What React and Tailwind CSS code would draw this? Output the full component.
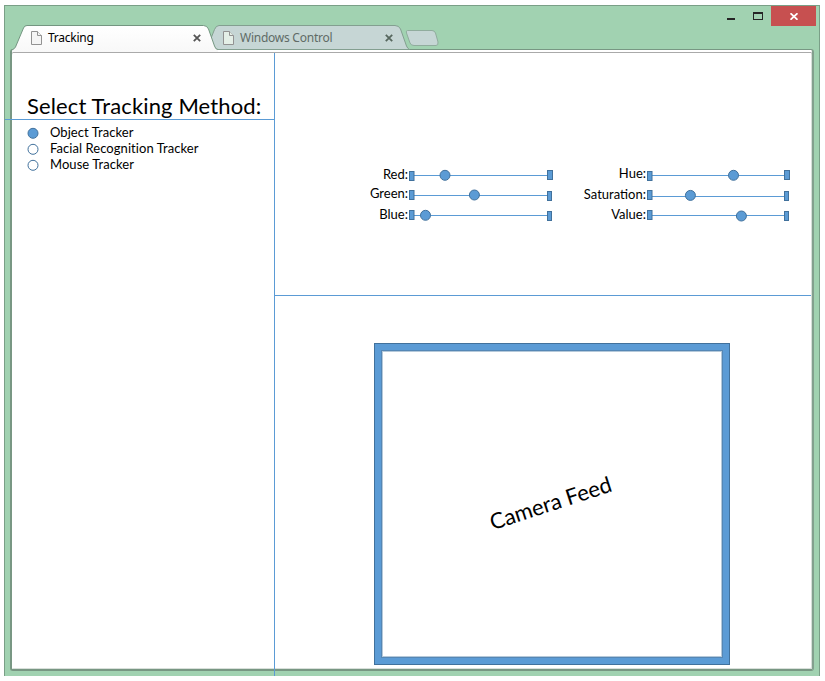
import React from "react";

const rgb = [
  { name: "Red:", nudge: "-mt-0.5", left: 6, line: 10, thumb: 37, ty: 10.3, right: 5, rw: 6 },
  { name: "Green:", nudge: "-mt-1", left: 5, line: 10, thumb: 66.4, ty: 10, right: 6, rw: 5 },
  { name: "Blue:", nudge: "-mt-0.5", left: 5, line: 10, thumb: 17.5, ty: 10.3, right: 6, rw: 5 },
];
const hsv = [
  { name: "Hue:", nudge: "-mt-1", left: 6, line: 10, thumb: 87.5, ty: 10.3, right: 5, rw: 6 },
  { name: "Saturation:", nudge: "-mt-0.5", left: 5, line: 11, thumb: 44.4, ty: 10.4, right: 6, rw: 5 },
  { name: "Value:", nudge: "-mt-0.5", left: 5, line: 10, thumb: 95.4, ty: 11, right: 6, rw: 5 },
];

function Slider({ s, end }) {
  return (
    <svg width="145" height="20" className="block shrink-0" fill="#5b9bd5" stroke="#41719c">
      <rect x="4" y={s.line} width="136" height="1" stroke="none" />
      <rect x="1.5" y={s.left + 0.5} width="4.500" height="9" />
      <rect x={end} y={s.right + 0.5} width={s.rw - 1} height="9" />
      <circle cx={s.thumb} cy={s.ty} r="5" />
    </svg>
  );
}

function SliderGroup({ items, end, className }) {
  return (
    <div className={"flex flex-col " + className}>
      {items.map((s) => (
        <div key={s.name} className="flex h-5 items-center justify-end">
          <span className={"whitespace-nowrap text-[13px] leading-4 " + s.nudge}>{s.name}</span>
          <Slider s={s} end={end} />
        </div>
      ))}
    </div>
  );
}

function PageIcon({ fill }) {
  return (
    <svg width="12" height="14" className="shrink-0" fill={fill} stroke="#929292">
      <path d="M.5 .5H6.500L10.500 4.500V13.500H.5Z" />
      <path d="M6.500 .5V4.500H10.500" />
    </svg>
  );
}

function Cross({ color }) {
  return (
    <svg width="8" height="8" className="shrink-0" stroke={color} strokeWidth="1.8">
      <path d="M.8 .8 7.200 7.200M7.200 .8 .8 7.200" />
    </svg>
  );
}

function Radio({ checked, label }) {
  return (
    <li className="flex h-4 items-center">
      <svg width="12" height="12" className="shrink-0" stroke="#41719c">
        <circle cx="6" cy="6.3" r="5" fill={checked ? "#5b9bd5" : "#fff"} />
      </svg>
      <span className="-mt-0.5 ml-[11px] whitespace-nowrap text-[13px] leading-4 tracking-[0.06px]">{label}</span>
    </li>
  );
}

export default function App() {
  return (
    <div className="h-[681px] w-[825px] overflow-hidden bg-white pl-1 pt-[5px] font-['Lato','Liberation_Sans',sans-serif] text-black">
      <div className="h-[671px] w-[816px] border-x border-t border-[#7a9f87] bg-[#a1d2b1]">
        <header className="relative flex h-[43px] justify-between">
          <svg className="absolute left-0 top-0 z-10" width="440" height="46">
            <defs>
              <linearGradient id="tab" x2="0" y2="1">
                <stop offset="0" stopColor="#fff" />
                <stop offset="1" stopColor="#f8f8f8" />
              </linearGradient>
            </defs>
            <path d="M202 43.500 Q205 38 206.500 31 L209.500 23.500 Q211 19.500 214 19.500 H390 Q394 19.500 395.500 23 L401.500 40 Q402.500 42.500 404.500 43.500 Z" fill="#c6d6d5" stroke="#839f90" />
            <path d="M402.500 24.500 H427 Q429.500 24.500 430.500 27 L433 36 Q433.500 39.500 431 39.500 H409 Q406 39.500 405 37 L401.500 27 Q400.800 24.500 402.500 24.500Z" fill="#c6d6d5" stroke="#90ac9d" />
            <path d="M7 46 V44 Q9.500 43 10.500 41 L18.500 22 Q19.500 19.500 22 19.500 H198.500 Q202 19.500 203.500 23 L209.500 40 Q210.500 43.500 213 43.500 V46 Z" fill="url(#tab)" />
            <path d="M6 44.500 Q9.500 43 10.500 41 L18.500 22 Q19.500 19.500 22 19.500 H198.500 Q202 19.500 203.500 23 L209.500 40 Q210.500 43.500 213 43.500" fill="none" stroke="#749681" />
          </svg>
          <div className="relative z-20 flex pl-[26px] pt-[22px] font-['Noto_Sans',sans-serif] text-[12px] tracking-[-0.25px]">
            <div className="flex h-5 w-[192px] items-center">
              <PageIcon fill="#f5f5f5" />
              <span className="ml-[5px] w-[113px] leading-5">Tracking</span>
              <span className="ml-8"><Cross color="#555" /></span>
            </div>
            <div className="flex h-5 w-[192px] items-center text-[#606b66]">
              <PageIcon fill="#e4efe7" />
              <span className="ml-[5px] w-[113px] whitespace-nowrap leading-5">Windows Control</span>
              <span className="ml-8"><Cross color="#56675e" /></span>
            </div>
          </div>
          <div className="mr-[3px] flex">
            <svg width="45" height="20" fill="#252525">
              <rect x="1" y="12" width="8" height="2" />
              <path d="M27 6H37V14H27ZM28 8V13H36V8Z" fillRule="evenodd" />
            </svg>
            <div className="flex h-5 w-[45px] items-center justify-center bg-[#c75050]">
              <svg width="8" height="7" stroke="#fff" strokeWidth="1.8"><path d="M.5 .3 7.500 6.700M7.500 .3 .5 6.700" /></svg>
            </div>
          </div>
        </header>
        <main className="ml-[5px] flex h-[622px] w-[804px] rounded-[3px] border-2 border-t border-[#789783] border-r-[#83a08e] bg-white shadow-[inset_0_2px_0_#fff,inset_0_3px_0_#aaa,inset_-1px_-1px_0_#d8dfda]">
          <aside className="mt-[3px] h-[623px] w-[263px] shrink-0 border-r border-[#5b9bd5]">
            <div className="-ml-[7px] flex h-[67px] items-end border-b border-[#5b9bd5] pl-[22px]">
              <h1 className="mb-[-1px] whitespace-nowrap text-[22px] leading-7 tracking-[0.13px]">Select Tracking Method:</h1>
            </div>
            <ul className="pl-[15px] pt-[5px]">
              <Radio checked label="Object Tracker" />
              <Radio label="Facial Recognition Tracker" />
              <Radio label="Mouse Tracker" />
            </ul>
          </aside>
          <div className="mt-[3px] w-[536px] shrink-0">
            <section className="flex h-[243px] border-b border-[#5b9bd5] pt-[112px]">
              <SliderGroup items={rgb} end={139.5} className="w-[278px]" />
              <SliderGroup items={hsv} end={138.5} className="w-[238px]" />
            </section>
            <section className="pl-[99px] pt-[47px]">
              <div className="h-[322px] w-[356px] border border-[#41719c] bg-[#5b9bd5] p-[6px]">
                <div className="flex h-full items-center justify-center border border-[#5587b5] bg-white pb-1 pr-1 shadow-[inset_0_0_0_1px_#b5c9da]">
                  <span className="-rotate-[18deg] whitespace-nowrap text-[22px]">Camera Feed</span>
                </div>
              </div>
            </section>
          </div>
        </main>
      </div>
    </div>
  );
}
